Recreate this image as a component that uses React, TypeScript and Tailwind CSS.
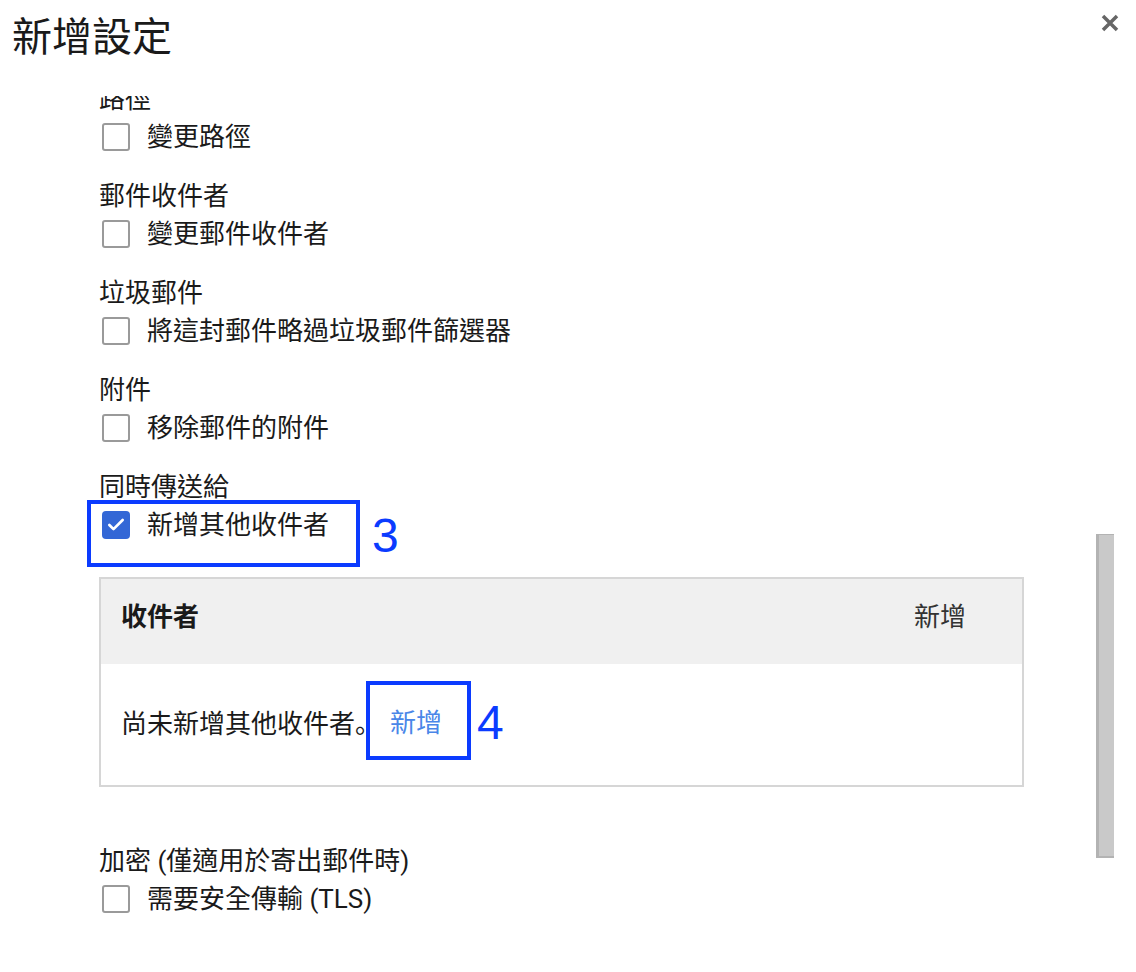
import { Check } from 'lucide-react';

// one labelled option block: a caption line plus a checkbox row
interface OptionProps {
  label: string;
  text: string;
  checked?: boolean;
  className?: string;
}

function Checkbox({ checked }: { checked?: boolean }) {
  if (checked) {
    return (
      <div className="w-[28px] h-[28px] ml-[3px] rounded-[4px] bg-[#3367d6] flex items-center justify-center shrink-0">
        <Check size={20} strokeWidth={3.2} color="#ffffff" />
      </div>
    );
  }
  return <div className="w-[28px] h-[28px] ml-[3px] rounded-[3px] border-[2.5px] border-[#9a9a9a] bg-white shrink-0" />;
}

function Option({ label, text, checked, className }: OptionProps) {
  return (
    <div className={className}>
      <div className="leading-[36px] h-[36px]">{label}</div>
      <div className="flex items-center h-[40px] gap-[17px]">
        <Checkbox checked={checked} />
        <span className="leading-[36px]">{text}</span>
      </div>
    </div>
  );
}

export default function App() {
  return (
    <div className="w-[1136px] h-[972px] bg-white overflow-hidden text-[#1a1a1a] font-['Roboto','Noto_Sans_CJK_TC',sans-serif]">
      <div className="h-[96px] flex justify-between">
        <h1 className="ml-[12px] mt-[18px] text-[40px] leading-[40px] font-normal text-[#1a1a1a]">新增設定</h1>
        <button className="mt-[13px] mr-[16px] w-[20px] h-[20px]" aria-label="close">
          <svg width="20" height="20" viewBox="0 0 20 20">
            <path d="M3 3 L17 17 M17 3 L3 17" stroke="#666666" strokeWidth="3.5" strokeLinecap="butt" fill="none" />
          </svg>
        </button>
      </div>

      <div className="flex h-[876px] overflow-hidden">
        <div className="flex-1 pl-[99px] text-[26px]">
          <div className="-mt-[15px]">
            <Option label="路徑" text="變更路徑" className="mb-[21px]" />
            <Option label="郵件收件者" text="變更郵件收件者" className="mb-[21px]" />
            <Option label="垃圾郵件" text="將這封郵件略過垃圾郵件篩選器" className="mb-[21px]" />
            <Option label="附件" text="移除郵件的附件" className="mb-[21px]" />

            <div>
              <div className="leading-[36px] h-[36px]">同時傳送給</div>
              <div className="relative flex items-center h-[40px] gap-[17px]">
                <Checkbox checked />
                <span className="leading-[36px]">新增其他收件者</span>
                <div className="absolute left-[-12px] top-[-5px] w-[273px] h-[67px] border-[4px] border-[#0b3bff]" />
                <div className="absolute left-[273px] top-[7px] text-[48px] leading-[48px] text-[#0b3bff] font-['Liberation_Sans',sans-serif]">
                  3
                </div>
              </div>
            </div>

            <div className="mt-[32px] w-[925px] border-2 border-[#d6d6d6]">
              <div className="h-[85px] bg-[#f0f0f0] flex items-center justify-between pl-[20px] pr-[56px] pb-[8px]">
                <span className="font-bold">收件者</span>
                <span className="text-[#333333]">新增</span>
              </div>
              <div className="h-[121px] bg-white flex items-center pl-[20px] pb-[4px]">
                <span>
                  尚未新增其他收件者<span className="font-['Noto_Sans_CJK_SC',sans-serif]">。</span>
                </span>
                <span className="relative ml-[9px] text-[#4a86e8] leading-[36px]">
                  新增
                  <span className="absolute left-[-24px] top-[-24px] w-[105px] h-[79px] border-[4px] border-[#0b3bff]" />
                  <span className="absolute left-[87px] top-[-6px] text-[48px] leading-[48px] text-[#0b3bff] font-['Liberation_Sans',sans-serif]">
                    4
                  </span>
                </span>
              </div>
            </div>

            <Option label="加密 (僅適用於寄出郵件時)" text="需要安全傳輸 (TLS)" className="mt-[56px]" />
          </div>
        </div>

        <div className="w-[18px] mr-[22px] pt-[438px] shrink-0">
          <div className="h-[324px] bg-[#c9c9c9] border-l-[3px] border-b-2 border-t border-[#b3b3b3]" />
        </div>
      </div>
    </div>
  );
}
